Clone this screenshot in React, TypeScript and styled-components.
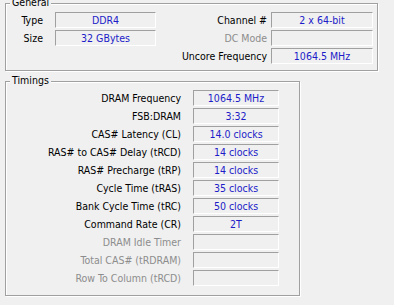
import styled, { createGlobalStyle } from 'styled-components';

const GlobalStyle = createGlobalStyle`
  html, body {
    margin: 0;
    padding: 0;
    background: #f0f0f0;
  }
  body {
    font-family: "DejaVu Sans Condensed", "Liberation Sans", Arial, sans-serif;
    font-size: 10.5px;
    color: #000;
    overflow: hidden;
  }
`;

const Page = styled.div`
  width: 394px;
  height: 305px;
  box-sizing: border-box;
  padding: 3px 0 0 5px;
  display: flex;
  flex-direction: column;
  gap: 10px;
  background: #f0f0f0;
  overflow: hidden;
`;

const Group = styled.div<{ $width: number }>`
  position: relative;
  box-sizing: border-box;
  width: ${p => p.$width}px;
  border: 1px solid #a0a0a0;
  box-shadow: inset 1px 1px 0 #fff, 1px 1px 0 #fff;
`;

const Legend = styled.span`
  position: absolute;
  top: -8px;
  left: 4px;
  padding: 0 2px;
  line-height: 13px;
  background: #f0f0f0;
`;

const GeneralGrid = styled.div`
  display: grid;
  grid-template-columns: 49px 101px 1fr 102px;
  grid-auto-rows: 16px;
  row-gap: 2px;
  padding: 8px 4px 6px 0;
`;

const TimingsGrid = styled.div`
  display: grid;
  grid-template-columns: 1fr 86px;
  grid-auto-rows: 16px;
  row-gap: 2px;
  column-gap: 12px;
  padding: 8px 20px 9px 0;
`;

const Label = styled.span<{ $pad?: number; $disabled?: boolean }>`
  text-align: right;
  line-height: 16px;
  white-space: nowrap;
  padding-right: ${p => p.$pad ?? 0}px;
  color: ${p => (p.$disabled ? '#8d8d8d' : '#000')};
`;

const Field = styled.div`
  box-sizing: border-box;
  height: 16px;
  border-top: 1px solid #a0a0a0;
  border-left: 1px solid #a0a0a0;
  border-bottom: 1px solid #fff;
  border-right: 1px solid #fff;
  color: #1c1cc8;
  text-align: center;
  line-height: 14px;
  white-space: nowrap;
`;

const Empty = styled.span``;

const timings: { label: string; value: string; disabled?: boolean }[] = [
  { label: 'DRAM Frequency', value: '1064.5 MHz' },
  { label: 'FSB:DRAM', value: '3:32' },
  { label: 'CAS# Latency (CL)', value: '14.0 clocks' },
  { label: 'RAS# to CAS# Delay (tRCD)', value: '14 clocks' },
  { label: 'RAS# Precharge (tRP)', value: '14 clocks' },
  { label: 'Cycle Time (tRAS)', value: '35 clocks' },
  { label: 'Bank Cycle Time (tRC)', value: '50 clocks' },
  { label: 'Command Rate (CR)', value: '2T' },
  { label: 'DRAM Idle Timer', value: '', disabled: true },
  { label: 'Total CAS# (tRDRAM)', value: '', disabled: true },
  { label: 'Row To Column (tRCD)', value: '', disabled: true },
];

const App = () => (
  <>
    <GlobalStyle />
    <Page>
      <Group $width={373}>
        <Legend>General</Legend>
        <GeneralGrid>
          <Label $pad={12}>Type</Label>
          <Field>DDR4</Field>
          <Label $pad={4}>Channel #</Label>
          <Field>2 x 64-bit</Field>

          <Label $pad={12}>Size</Label>
          <Field>32 GBytes</Field>
          <Label $pad={4} $disabled>DC Mode</Label>
          <Field />

          <Empty />
          <Empty />
          <Label $pad={4}>Uncore Frequency</Label>
          <Field>1064.5 MHz</Field>
        </GeneralGrid>
      </Group>

      <Group $width={295}>
        <Legend>Timings</Legend>
        <TimingsGrid>
          {timings.map(t => (
            <>
              <Label key={`l-${t.label}`} $disabled={t.disabled}>{t.label}</Label>
              <Field key={`v-${t.label}`}>{t.value}</Field>
            </>
          ))}
        </TimingsGrid>
      </Group>
    </Page>
  </>
);

export default App;
